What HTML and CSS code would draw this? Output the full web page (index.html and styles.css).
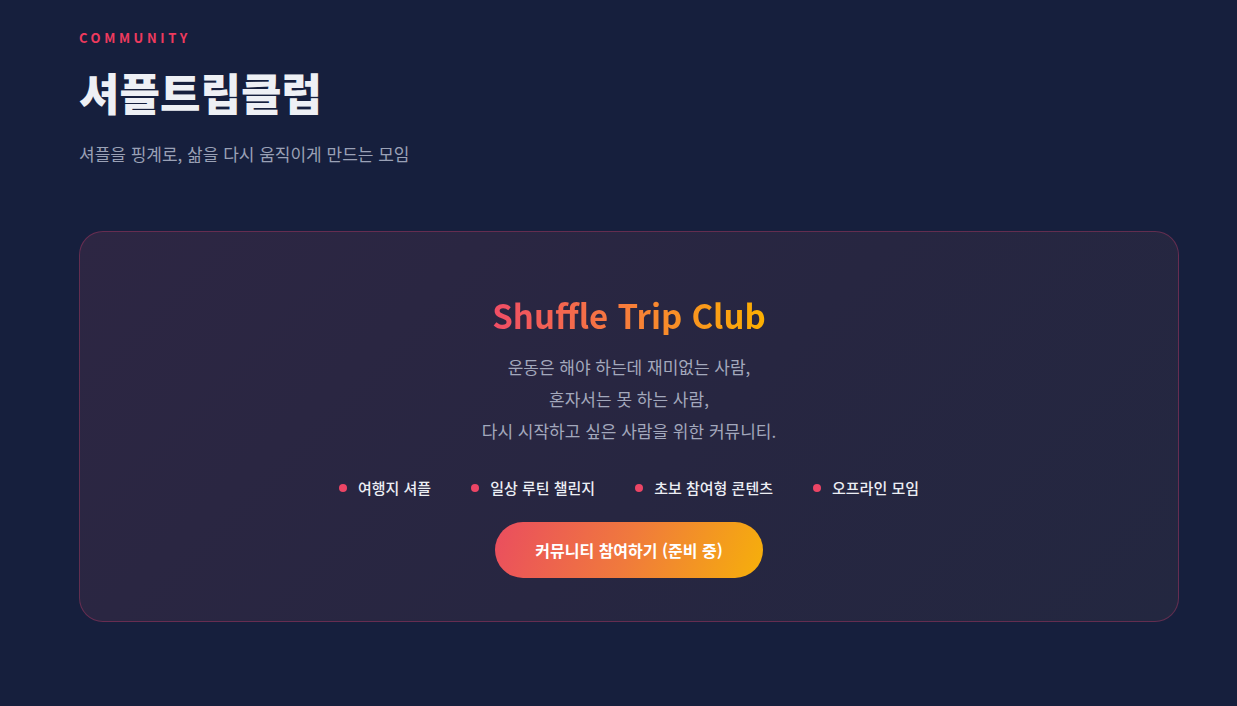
FILE: index.html
```html
<!DOCTYPE html>
<html lang="ko">
<head>
<meta charset="utf-8">
<title>셔플트립클럽</title>
<link rel="stylesheet" href="styles.css">
</head>
<body>
<section class="community">
  <div class="container">
    <p class="eyebrow">COMMUNITY</p>
    <h1 class="title">셔플트립클럽</h1>
    <p class="subtitle">셔플을 핑계로, 삶을 다시 움직이게 만드는 모임</p>

    <div class="card">
      <h2 class="card-title">Shuffle Trip Club</h2>
      <p class="card-desc">운동은 해야 하는데 재미없는 사람,<br>혼자서는 못 하는 사람,<br>다시 시작하고 싶은 사람을 위한 커뮤니티.</p>
      <ul class="features">
        <li>여행지 셔플</li>
        <li>일상 루틴 챌린지</li>
        <li>초보 참여형 콘텐츠</li>
        <li>오프라인 모임</li>
      </ul>
      <button class="cta" type="button">커뮤니티 참여하기 (준비 중)</button>
    </div>
  </div>
</section>
</body>
</html>
```

FILE: styles.css
```css
* { box-sizing: border-box; }
html, body {
  margin: 0;
  padding: 0;
  background: #161f3d;
  font-family: "Noto Sans CJK KR", "Noto Sans", sans-serif;
  color: #e9ebf1;
}
.community {
  padding: 28px 0 80px;
}
.container {
  width: 1100px;
  margin-left: 79px;
}
.eyebrow {
  margin: 0;
  font-size: 13px;
  line-height: 20px;
  font-weight: 700;
  letter-spacing: 3.6px;
  color: #ee3a5e;
}
.title {
  margin: 14px 0 0;
  font-size: 44px;
  line-height: 60px;
  font-weight: 900;
  letter-spacing: 0;
  color: #eef0f5;
}
.subtitle {
  margin: 20px 0 0;
  font-size: 17px;
  line-height: 24px;
  color: #9aa1b6;
}
.card {
  margin-top: 65px;
  border: 1px solid rgba(214, 60, 110, 0.35);
  border-radius: 24px;
  background: linear-gradient(135deg, #2d2643 0%, #272641 55%, #232740 100%);
  padding: 63px 40px 43px;
  display: flex;
  flex-direction: column;
  align-items: center;
  text-align: center;
}
.card-title {
  margin: 0;
  font-size: 33px;
  line-height: 40px;
  font-weight: 700;
  background: linear-gradient(90deg, #f04d66 0%, #f77e3a 50%, #fcb000 100%);
  -webkit-background-clip: text;
  background-clip: text;
  color: transparent;
}
.card-desc {
  margin: 16px 0 0;
  font-size: 17px;
  line-height: 32px;
  color: #a3a8bc;
}
.features {
  list-style: none;
  margin: 30px 0 0;
  padding: 0;
  display: flex;
  gap: 40px;
}
.features li {
  display: flex;
  align-items: center;
  gap: 11px;
  font-size: 15px;
  line-height: 22px;
  font-weight: 500;
  color: #eceef4;
}
.features li::before {
  content: "";
  width: 8px;
  height: 8px;
  border-radius: 50%;
  background: #ec4565;
}
.cta {
  margin-top: 23px;
  height: 56px;
  padding: 0 40px;
  border: none;
  border-radius: 28px;
  background: linear-gradient(110deg, #ea4d5f 0%, #f07a3c 50%, #f6b00a 100%);
  color: #ffffff;
  font-family: inherit;
  font-size: 16px;
  font-weight: 700;
}
```
